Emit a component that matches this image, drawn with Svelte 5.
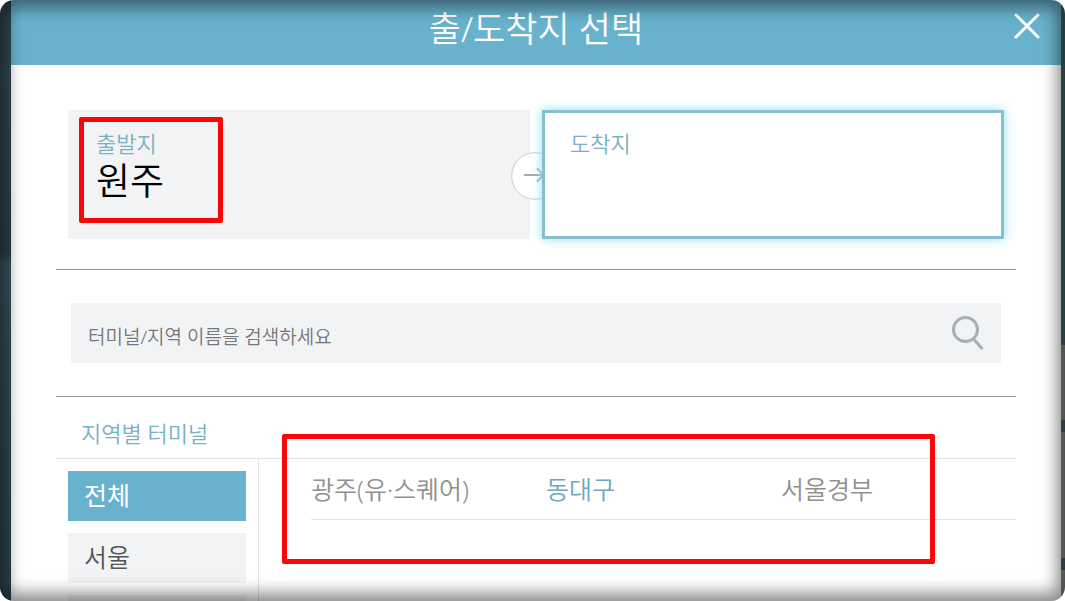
<script lang="ts">
  const regions = ['전체', '서울'];
  const terminals = [
    { name: '광주(유·스퀘어)', open: false },
    { name: '동대구', open: true },
    { name: '서울경부', open: false }
  ];
  let region = $state('전체');
  let query = $state('');
</script>

<div class="screen">
  <div class="dialog" role="dialog" aria-labelledby="dialog-title">
    <header>
      <h1 id="dialog-title">출/도착지 선택</h1>
      <button class="close" type="button" aria-label="닫기">
        <svg viewBox="0 0 26 26" width="26" height="26" aria-hidden="true">
          <path d="M2 2 24 24M24 2 2 24" />
        </svg>
      </button>
    </header>

    <main>
      <div class="route">
        <button class="place" type="button">
          <span class="label">출발지</span>
          <span class="value">원주</span>
          <span class="mark"></span>
        </button>
        <span class="arrow">
          <svg viewBox="0 0 48 48" width="48" height="48" aria-hidden="true">
            <circle cx="24" cy="24" r="23.300" />
            <path d="M13 23H33M26 16.500l6.500 6.500L26 29.500" />
          </svg>
        </span>
        <button class="place active" type="button">
          <span class="label">도착지</span>
        </button>
      </div>

      <form class="search" onsubmit={(e) => e.preventDefault()}>
        <input
          type="text"
          aria-label="터미널/지역 이름"
          placeholder="터미널/지역 이름을 검색하세요"
          bind:value={query}
        />
        <button type="submit" aria-label="검색">
          <svg viewBox="0 0 34 36" width="34" height="36" aria-hidden="true">
            <circle cx="14.500" cy="14.500" r="12" />
            <path d="M22.500 24 31.500 34" />
          </svg>
        </button>
      </form>

      <h2>지역별 터미널</h2>
      <div class="browse">
        <nav>
          {#each regions as name}
            <button type="button" class:selected={region === name} onclick={() => (region = name)}>
              {name}
            </button>
          {/each}
        </nav>
        <section>
          <ul>
            {#each terminals as t}
              <li><button type="button" class:open={t.open}>{t.name}</button></li>
            {/each}
          </ul>
          <span class="mark"></span>
        </section>
      </div>
    </main>
  </div>
</div>

<style>
  :global(body) {
    margin: 0;
    background: #fff;
  }

  .screen {
    position: relative;
    box-sizing: border-box;
    height: 100vh;
    overflow: hidden;
    padding: 0 4px 0 11px;
    border-radius: 14px;
    background:
      linear-gradient(#40606a 345px, #858585 345px 420px, #40606a 420px 432px, #858585 432px 558px, #40606a 558px 570px, #858585 570px)
        right / 4px 100% no-repeat,
      linear-gradient(#30464f, #334c56 12%, #2c444d 42%, #3c5862 44%, #344e58 65%, #2c4650);
    font-family: 'Noto Sans', 'Noto Sans CJK KR', sans-serif;
    font-weight: 350;
  }

  .screen::after {
    content: '';
    position: absolute;
    inset: 0;
    z-index: 5;
    border-radius: 14px;
    box-shadow: inset 0 0 16px 8px rgba(0, 0, 0, 0.46);
    pointer-events: none;
  }

  .dialog {
    min-height: 100%;
    background: #fff;
  }

  button,
  input {
    margin: 0;
    padding: 0;
    border: 0;
    border-radius: 0;
    background: none;
    font: inherit;
    text-align: left;
  }

  button {
    cursor: pointer;
  }

  svg {
    display: block;
    fill: none;
  }

  header {
    display: grid;
    grid-template-columns: 1fr auto 1fr;
    box-sizing: border-box;
    height: 65px;
    padding: 0 21px;
    background: #69b2cd;
    color: #fff;
  }

  h1 {
    grid-column: 2;
    margin: 0;
    font-size: 35px;
    font-weight: 350;
    line-height: 58px;
  }

  .close {
    justify-self: end;
    align-self: start;
    padding-top: 13px;
  }

  .close path {
    stroke: #fff;
    stroke-width: 3;
    stroke-linecap: round;
  }

  main {
    padding: 45px 45px 0;
  }

  .route {
    position: relative;
    display: grid;
    grid-template-columns: 1fr 1fr;
    gap: 12px;
    padding: 0 12px 30px;
    border-bottom: 1px solid #999;
  }

  .place {
    position: relative;
    display: flex;
    flex-direction: column;
    justify-content: flex-start;
    box-sizing: border-box;
    height: 129px;
    padding: 17px 28px;
    background: #f2f3f5;
  }

  .place.active {
    padding: 14px 25px;
    border: 3px solid #85bfd1;
    background: #fff;
    box-shadow: 0 0 10px #8edcf6;
  }

  .label {
    color: #78b0c4;
    font-size: 22px;
    line-height: 32px;
  }

  .value {
    color: #000;
    font-size: 37px;
    line-height: 44px;
  }

  .arrow {
    position: absolute;
    top: 42px;
    left: calc(50% - 25px);
  }

  .arrow circle {
    fill: #fff;
    stroke: #c9c9cb;
  }

  .arrow path {
    stroke: #aaaaac;
    stroke-width: 2;
  }

  .mark {
    position: absolute;
    box-sizing: border-box;
    border: 5px solid #fb0507;
    border-radius: 2px;
    pointer-events: none;
  }

  .place .mark {
    top: 7px;
    left: 11px;
    width: 144px;
    height: 106px;
  }

  .search {
    display: flex;
    align-items: center;
    margin: 33px 15px;
    padding: 0 16px 0 17px;
    background: #f2f3f5;
  }

  .search input {
    flex: 1;
    min-width: 0;
    height: 60px;
    padding-top: 8px;
    box-sizing: border-box;
    outline: 0;
    color: #333;
    font-size: 19px;
  }

  .search input::placeholder {
    color: #777;
    opacity: 1;
  }

  .search circle,
  .search path {
    stroke: #a9adb8;
    stroke-width: 3;
  }

  h2 {
    margin: 0;
    padding: 11px 25px 0;
    border-top: 1px solid #999;
    border-bottom: 1px solid #e3e3e3;
    color: #78b0c4;
    font-size: 22px;
    font-weight: 350;
    line-height: 50px;
  }

  .browse {
    display: flex;
  }

  nav {
    display: flex;
    flex: 0 0 178px;
    flex-direction: column;
    gap: 12px;
    padding: 12px;
    border-right: 1px solid #e3e3e3;
  }

  nav button,
  nav::after {
    box-sizing: border-box;
    height: 50px;
    background: #f2f3f5;
  }

  nav::after {
    content: '';
  }

  nav button {
    padding: 0 16px 2px;
    color: #555;
    font-size: 25px;
    line-height: 46px;
  }

  nav .selected {
    background: #69b2cd;
    color: #fff;
    font-weight: 400;
  }

  section {
    position: relative;
    flex: 1;
    padding-left: 52px;
  }

  section .mark {
    top: -25px;
    right: 81px;
    left: 23px;
    height: 130px;
  }

  ul {
    display: grid;
    grid-template-columns: repeat(3, 1fr);
    margin: 0;
    padding: 0;
    border-bottom: 1px solid #e3e3e3;
    list-style: none;
  }

  li {
    height: 60px;
  }

  li button {
    color: #909090;
    font-size: 25px;
    line-height: 60px;
  }

  li .open {
    color: #6ba9bf;
  }
</style>
